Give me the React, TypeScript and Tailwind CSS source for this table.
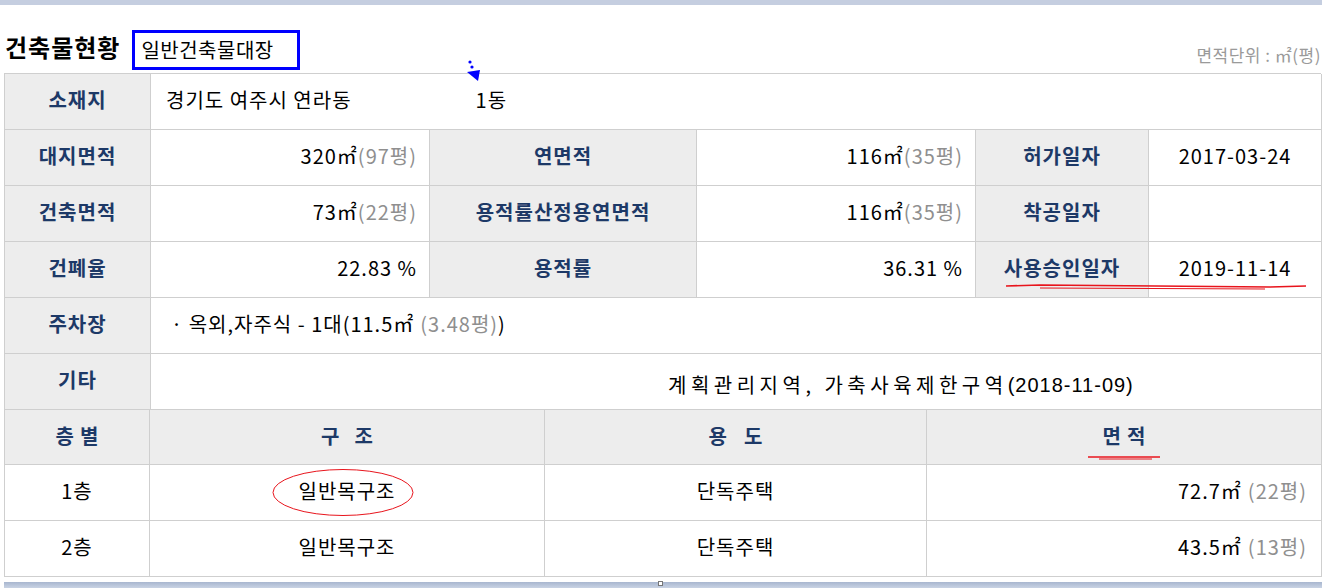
import React from 'react';

const font = { fontFamily: '"Noto Sans CJK KR", "Noto Sans", sans-serif' };

const th =
  'bg-[#ededed] text-[#1d3967] font-bold text-[20px] tracking-[1px] flex items-center justify-center pb-[3px] border-r border-b border-[#cfcfcf]';
const td = 'flex items-center pb-[3px] border-r border-b border-[#cfcfcf] text-[20px] tracking-[1px] text-black';

const Py: React.FC<{ v: string }> = ({ v }) => <span className="text-[#8f8f8f]">({v}평)</span>;

const floors = [
  { floor: '1층', struct: '일반목구조', use: '단독주택', area: '72.7㎡', py: '22' },
  { floor: '2층', struct: '일반목구조', use: '단독주택', area: '43.5㎡', py: '13' },
];

const App: React.FC = () => {
  return (
    <div className="w-[1322px] h-[588px] bg-white relative overflow-hidden" style={font}>
      {/* top strip */}
      <div className="h-[5px] bg-[#c5cee0]" />

      <div className="pl-[4px] pr-[1px]">
        {/* title */}
        <div className="h-[68px] flex items-end justify-between pb-[3px]">
          <div className="flex items-end gap-[12px]">
            <h2 className="text-[24px] tracking-[1px] font-bold text-black leading-none pb-[11px] pl-[1px]">건축물현황</h2>
            <div className="w-[168px] h-[40px] border-[3px] border-[#0000ff] flex items-center pl-[6px] text-[20px] tracking-[0.5px] text-black">
              일반건축물대장
            </div>
          </div>
          <div className="text-[17px] tracking-[0.5px] text-[#9a9a9a] pb-[3px]">면적단위 : ㎡(평)</div>
        </div>

        {/* summary table */}
        <div className="grid grid-cols-[146px_279px_267px_279px_173px_173px] auto-rows-[56px] border-l border-t border-[#cfcfcf]">
          <div className={th}>소재지</div>
          <div className={`${td} col-span-5 pl-[15px]`}>
            <span>경기도 여주시 연라동</span>
            <span className="ml-[124px]">1동</span>
          </div>

          <div className={th}>대지면적</div>
          <div className={`${td} justify-end pr-[12px]`}>
            320㎡<Py v="97" />
          </div>
          <div className={th}>연면적</div>
          <div className={`${td} justify-end pr-[12px]`}>
            116㎡<Py v="35" />
          </div>
          <div className={th}>허가일자</div>
          <div className={`${td} justify-center`}>2017-03-24</div>

          <div className={th}>건축면적</div>
          <div className={`${td} justify-end pr-[12px]`}>
            73㎡<Py v="22" />
          </div>
          <div className={th}>용적률산정용연면적</div>
          <div className={`${td} justify-end pr-[12px]`}>
            116㎡<Py v="35" />
          </div>
          <div className={th}>착공일자</div>
          <div className={td} />

          <div className={th}>건폐율</div>
          <div className={`${td} justify-end pr-[12px]`}>22.83 %</div>
          <div className={th}>용적률</div>
          <div className={`${td} justify-end pr-[12px]`}>36.31 %</div>
          <div className={th}>사용승인일자</div>
          <div className={`${td} justify-center`}>2019-11-14</div>

          <div className={th}>주차장</div>
          <div className={`${td} col-span-5 pl-[20px]`}>
            · 옥외,자주식 - 1대(11.5㎡ <span className="text-[#8f8f8f] ml-[6px]">(3.48평)</span>)
          </div>

          <div className={th}>기타</div>
          <div className={`${td} col-span-5 pl-[517px] pt-[10px] text-[18px] text-[#333] tracking-normal`}>
            <span className="tracking-[4.5px]">계획관리지역, 가축사육제한구역</span>
            <span className="text-[20px] tracking-[1px]" style={{ fontFamily: '"Liberation Sans", sans-serif' }}>
              (2018-11-09)
            </span>
          </div>
        </div>

        {/* floor table */}
        <div className="grid grid-cols-[145px_395px_382px_395px] border-l border-[#cfcfcf]">
          <div className={`${th} h-[55px] tracking-normal gap-[6px]`}>
            <span>층</span>
            <span>별</span>
          </div>
          <div className={`${th} h-[55px] tracking-normal gap-[15px]`}>
            <span>구</span>
            <span>조</span>
          </div>
          <div className={`${th} h-[55px] tracking-normal gap-[17px]`}>
            <span>용</span>
            <span>도</span>
          </div>
          <div className={`${th} h-[55px] tracking-normal gap-[6px]`}>
            <span>면</span>
            <span>적</span>
          </div>
          {floors.map((f, i) => (
            <React.Fragment key={i}>
              <div className={`${td} h-[56px] justify-center`}>{f.floor}</div>
              <div className={`${td} h-[56px] justify-center`}>{f.struct}</div>
              <div className={`${td} h-[56px] justify-center`}>{f.use}</div>
              <div className={`${td} h-[56px] justify-end pr-[14px]`}>
                {f.area}
                <span className="text-[#8f8f8f] ml-[6px]">({f.py}평)</span>
              </div>
            </React.Fragment>
          ))}
        </div>
      </div>

      {/* bottom strip */}
      <div className="absolute left-[4px] right-0 bottom-0 h-[6px] bg-gradient-to-b from-[#a8b6cf] to-[#c9d3e4]" />
      <div className="absolute left-[658px] bottom-[2px] w-[5px] h-[5px] bg-white border border-[#777]" />

      {/* annotations */}
      <svg className="absolute left-0 top-0 pointer-events-none" width="1322" height="588">
        <circle cx="470" cy="62" r="1.6" fill="#0000ff" />
        <circle cx="472" cy="67" r="1.6" fill="#0000ff" />
        <polygon points="467,72 480,70 478,81" fill="#0000ff" />
        <path d="M1006 286 L1040 285 L1270 287 L1306 286" stroke="#e8141c" strokeWidth="1.6" fill="none" />
        <path d="M1040 288 L1265 289" stroke="#e8141c" strokeWidth="1" fill="none" />
        <path d="M1088 457 L1160 457" stroke="#e8141c" strokeWidth="1.6" fill="none" />
        <path d="M1099 459 L1152 459" stroke="#e8141c" strokeWidth="1" fill="none" />
        <ellipse cx="343" cy="492.5" rx="70" ry="23" stroke="#e8141c" strokeWidth="1" fill="none" />
      </svg>
    </div>
  );
};

export default App;
